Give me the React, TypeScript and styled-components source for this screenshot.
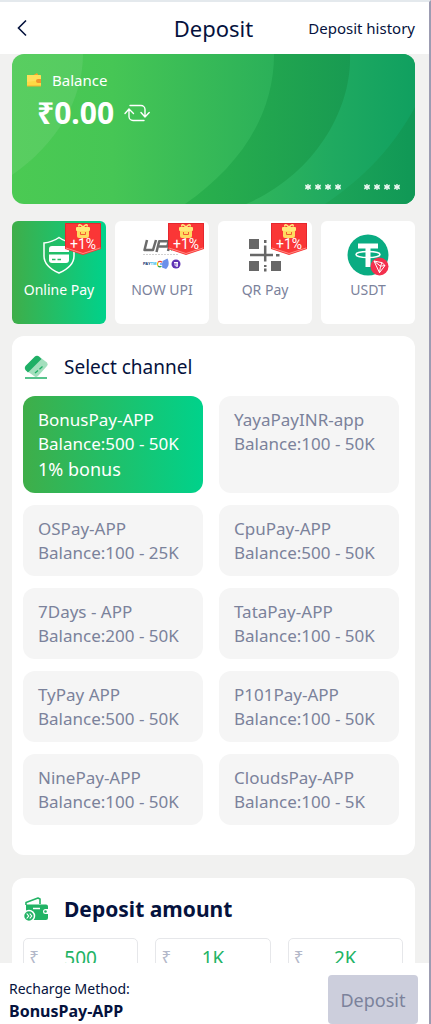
import React, { useState } from "react";
import styled, { createGlobalStyle } from "styled-components";

const GlobalStyle = createGlobalStyle`
  *, *::before, *::after { box-sizing: border-box; }
  body { margin: 0; background: #f1f1f0; font-family: "Noto Sans", "Open Sans", sans-serif; color: #05123d; }
  button { font: inherit; color: inherit; border: 0; padding: 0; background: none; cursor: pointer; }
  h1, h2, p { margin: 0; font-weight: 400; }
`;

const green = "linear-gradient(90deg, #3fae49, #00d28b)";

const Page = styled.div`
  display: flex;
  flex-direction: column;
  height: 100vh;
  border-top: 2px solid #e4e9ed;
  border-right: 2px solid #9c9cb2;
`;

const Header = styled.header`
  display: grid;
  grid-template-columns: 1fr auto 1fr;
  align-items: center;
  flex: none;
  height: 52px;
  padding: 0 14px 0 12px;
  background: #fff;
`;

const BackButton = styled.button`
  display: flex;
  justify-self: start;
`;

const Title = styled.h1`
  font-size: 22px;
  line-height: 30px;
`;

const HistoryLink = styled.a`
  justify-self: end;
  color: inherit;
  font-size: 15px;
  line-height: 20px;
  text-decoration: none;
  white-space: nowrap;
`;

const Main = styled.main`
  flex: 1;
  min-height: 0;
  overflow-y: auto;
  scrollbar-width: none;
  padding: 0 14px 24px 12px;
`;

const BalanceCard = styled.section`
  position: relative;
  z-index: 0;
  display: flex;
  flex-direction: column;
  height: 150px;
  padding: 15px 14px 13px;
  border-radius: 12px;
  overflow: hidden;
  color: #fff;
`;

const CardArt = styled.svg`
  position: absolute;
  inset: 0;
  width: 100%;
  height: 100%;
  z-index: -1;
`;

const BalanceLabel = styled.div`
  display: flex;
  align-items: center;
  gap: 10px;
  font-size: 15px;
  line-height: 22px;
`;

const BalanceRow = styled.div`
  display: flex;
  align-items: center;
  gap: 10px;
  padding: 4px 0 0 11px;
`;

const Amount = styled.strong`
  font-size: 30px;
  line-height: 36px;
`;

const RefreshButton = styled.button`
  display: flex;
`;

const Mask = styled.div`
  display: flex;
  justify-content: flex-end;
  gap: 21px;
  margin-top: auto;
`;

const Methods = styled.nav`
  display: grid;
  grid-template-columns: repeat(4, 1fr);
  gap: 9px;
  margin: 17px 0 12px;
`;

const Method = styled.button<{ $active: boolean }>`
  position: relative;
  display: flex;
  flex-direction: column;
  align-items: center;
  height: 103px;
  padding-top: 13px;
  border-radius: 6px;
  font-size: 14px;
  line-height: 20px;
  color: ${(p) => (p.$active ? "#fff" : "#7b829b")};
  background: ${(p) => (p.$active ? green : "#fff")};
`;

const MethodLabel = styled.span`
  margin-top: 4px;
`;

const Ribbon = styled.span`
  position: absolute;
  top: 0;
  right: 3px;
  display: flex;
  width: 40px;
  height: 36px;
  justify-content: center;
  align-items: flex-end;
  padding-bottom: 5px;
  font-family: Roboto, sans-serif;
  font-size: 14px;
  line-height: 16px;
  color: #fff;
`;

const RibbonArt = styled.svg`
  position: absolute;
  inset: 0;
`;

const RibbonText = styled.span`
  position: relative;
`;

const Panel = styled.section`
  padding: 18px 12px 30px 11px;
  margin-bottom: 23px;
  border-radius: 12px;
  background: #fff;
`;

const PanelHead = styled.div`
  display: flex;
  align-items: center;
  gap: 15px;
  height: 26px;
  margin-bottom: 16px;
`;

const PanelTitle = styled.h2<{ $bold?: boolean }>`
  font-size: ${(p) => (p.$bold ? 21 : 19)}px;
  line-height: 26px;
  font-weight: ${(p) => (p.$bold ? 700 : 400)};
`;

const Channels = styled.div`
  display: grid;
  grid-template-columns: 1fr 1fr;
  gap: 12px 16px;
  padding-right: 4px;
`;

const Channel = styled.button<{ $active: boolean }>`
  display: flex;
  flex-direction: column;
  padding: 12px 15px 11px;
  border-radius: 12px;
  text-align: left;
  font-size: 17px;
  line-height: 24px;
  white-space: nowrap;
  color: ${(p) => (p.$active ? "#fff" : "#7b829b")};
  background: ${(p) => (p.$active ? green : "#f5f5f5")};
`;

const Bonus = styled.span`
  font-size: 18px;
  line-height: 26px;
`;

const Amounts = styled.div`
  display: grid;
  grid-template-columns: repeat(3, 1fr);
  gap: 17px;
`;

const AmountOption = styled.button`
  display: grid;
  grid-template-columns: 10px 1fr 10px;
  align-items: center;
  height: 40px;
  padding: 0 5px;
  border: 1px solid #e6e7ea;
  border-radius: 5px;
  font-size: 19px;
  line-height: 24px;
  color: #22b365;
`;

const Rupee = styled.span`
  font-size: 17px;
  color: #b3b8c9;
`;

const Footer = styled.footer`
  display: flex;
  flex: none;
  justify-content: space-between;
  align-items: flex-start;
  height: 61px;
  padding: 12px 11px 0 9px;
  background: #fff;
`;

const Recharge = styled.p`
  padding-top: 3px;
  font-size: 14px;
  line-height: 22px;
`;

const Chosen = styled.strong`
  display: block;
  font-size: 16px;
`;

const SubmitButton = styled.button`
  width: 90px;
  height: 49px;
  border-radius: 4px;
  font-size: 18px;
  color: #7b829b;
  background: #cccedc;
`;

const Stars = () => (
  <svg width="38" height="8" viewBox="0 0 38 8" fill="none" stroke="#fff" strokeOpacity=".9" strokeWidth="1.4">
    {[4, 14, 24, 34].map((x) => (
      <path key={x} d={`M${x} 1v6M${x - 2.7} 2l5.4 4M${x + 2.7} 2l-5.4 4M${x - 2.5} 4h5`} />
    ))}
  </svg>
);

const ShieldIcon = () => (
  <svg width="36" height="42" viewBox="0 0 36 42">
    <path d="M18 3.5C13 7 8 8.500 3 9v13c0 8 7 13.500 15 17 8-3.500 15-9 15-17V9c-5-.5-10-2-15-5.500Z" fill="none" stroke="#fff" strokeWidth="1.500" />
    <path d="M11 12h14a3 3 0 0 1 3 3v3H8v-3a3 3 0 0 1 3-3Z" fill="#fff" />
    <path d="M8 20.500h20v5.500a3 3 0 0 1-3 3H11a3 3 0 0 1-3-3Z" fill="#fff" />
    <path d="M11 25.500h3.500M16.500 25.500H20" stroke="#28ba63" strokeWidth="1.500" />
  </svg>
);

const UpiIcon = () => (
  <svg width="42" height="42" viewBox="0 0 42 42">
    <g fill="none" stroke="#6b6b6b" strokeWidth="2.500" strokeLinejoin="round">
      <path d="M6 6 3.500 16h8.500L15 6" />
      <path d="m15.500 18 2.700-10.700h9.500l-1.300 5.200H18" />
      <path d="M30 6 27 17" />
    </g>
    <path d="M33 6 38 11 30 17Z" fill="#219653" />
    <path d="M2 20.500h36" stroke="#d2d2d2" strokeDasharray="2 1" />
    <text x="2" y="31" fontFamily="Liberation Sans" fontWeight="700" fontSize="4" fill="#10346f">PAY<tspan fill="#20b7ec">TM</tspan></text>
    <path d="M21 28.300a3 3 0 0 0-4 0" fill="none" stroke="#ea4335" strokeWidth="1.300" />
    <path d="M17 28.300a3 3 0 0 0 0 3.600" fill="none" stroke="#fbbc05" strokeWidth="1.300" />
    <path d="M17 31.900a3 3 0 0 0 3.500.4" fill="none" stroke="#34a853" strokeWidth="1.300" />
    <path d="M19 30h3" fill="none" stroke="#4285f4" strokeWidth="1.300" />
    <path d="m21.500 27 5-2.500c2 4 1.500 8-1.500 10.500l-4-1.500Z" fill="#6b90ea" />
    <circle cx="35" cy="30" r="4.500" fill="#5f33b4" />
    <path d="M33 28.500h4M34 28.500v2c0 1.500 1 2 2 1.500v-3.500M36.200 29v4" fill="none" stroke="#fff" />
  </svg>
);

const QrIcon = () => (
  <svg width="42" height="42" viewBox="0 0 42 42" fill="#676767">
    <path d="M5 5h10v10H5zM5 27h10v10H5zM27 27h10v10H27zM27 5h10v10H27z" />
    <path d="M20 6h2.500v3H20zM20 31h2.500v2H20zM20 34.500h2.500v3H20zM32 20h3.500v2.500H32z" />
    <path d="M6 21h23M21.200 11.500v16" stroke="#676767" strokeWidth="2.500" />
  </svg>
);

const UsdtIcon = () => (
  <svg width="42" height="42" viewBox="0 0 42 42">
    <circle cx="21" cy="21" r="20.500" fill="#0aac82" />
    <path d="M11 9.500h20v5h-7.500V33h-5V14.500H11Z" fill="#fff" />
    <ellipse cx="21" cy="20.500" rx="12" ry="3" fill="none" stroke="#fff" strokeWidth="1.500" />
    <circle cx="32.500" cy="32.500" r="9" fill="#f3304d" />
    <path d="m27 27 8 1.700 3 2.800-5.500 7.200Zm0 0 6.500 5.200 4.500-.7M35 28.700 33.500 32.200l-1 6.500" fill="none" stroke="#fff" strokeLinejoin="round" />
  </svg>
);

const Badge = () => (
  <Ribbon>
    <RibbonArt width="40" height="36" viewBox="0 0 40 36">
      <path d="M2 2h36v26l-18 6L2 28Z" fill="#fa3636" />
      <path d="M2.500 26V2.500h35V26" fill="none" stroke="#e5262e" />
      <path d="M3 27 20 32.500 37 27" fill="none" stroke="#ff8b84" />
      <path d="M14 9h12v6a2 2 0 0 1-2 2h-8a2 2 0 0 1-2-2Z" fill="#ffdc60" />
      <rect x="13" y="6" width="14" height="4" rx="1" fill="#ffe879" />
      <path d="M20 6.500c-2-3.500-5-3.500-4-1M20 6.500c2-3.500 5-3.500 4-1" fill="none" stroke="#ffe879" strokeWidth="1.600" />
      <path d="M17.500 11v2.500h5V11" fill="none" stroke="#f35b35" />
    </RibbonArt>
    <RibbonText>+1%</RibbonText>
  </Ribbon>
);

const WalletIcon = () => (
  <svg width="16" height="16" viewBox="0 0 16 16">
    <path d="m6 4 5-3 2 3Z" fill="#ff9f22" />
    <path d="M1 3h13a1 1 0 0 1 1 1v10H1Z" fill="#ffd944" />
    <path d="M1 3h13a1 1 0 0 1 1 1v4L1 10Z" fill="#ffe264" opacity=".7" />
    <path d="M1 14h14" stroke="#f7ad2c" />
    <path d="M12 7h3v4h-3a2 2 0 0 1 0-4Z" fill="#f3952b" />
  </svg>
);

const RefreshIcon = () => (
  <svg width="26" height="18" viewBox="0 0 26 18" fill="none" stroke="#fff" strokeWidth="1.400" strokeLinecap="round" strokeLinejoin="round">
    <path d="M6 1.500h11a4 4 0 0 1 4 4V13M17 8.500l4 4.500 4.200-4.500" />
    <path d="M20 16.500H9a4 4 0 0 1-4-4V5M1 9.500 5 5l4.500 4.500" />
  </svg>
);

const CardIcon = () => (
  <svg width="26" height="26" viewBox="0 0 26 26">
    <path d="M12 2.500Q14 1 16 2.500L24 8.500Q25.500 10.500 24 12L15 22Q13 24 11 22L2.500 16Q1 14 2.500 12Z" fill="#a3dfbd" />
    <path d="M12 2.500Q14 1 16 2.500L18.500 5 5 18.500 2.500 16Q1 14 2.500 12Z" fill="#1faf66" />
    <path d="m12 19 3-2.500m1.500-1.300 3-2.700" stroke="#1faf66" strokeWidth="1.300" />
    <path d="M2 24h22" stroke="#1faf66" strokeWidth="1.500" />
  </svg>
);

const CashIcon = () => (
  <svg width="26" height="26" viewBox="0 0 26 26">
    <path d="M3 9V6.500L15 2l2 1v5" fill="none" stroke="#22b365" strokeWidth="1.600" strokeLinejoin="round" />
    <path d="M3 8.500h20q2 0 2 2V13h-2.500a2.500 2.500 0 0 0 0 5H25v4q0 2-2 2H6q-3 0-3-3Z" fill="#22b365" />
    <circle cx="22.500" cy="15.500" r="1.300" fill="#22b365" />
    <path d="M10 12.500h7" stroke="#fff" strokeWidth="1.500" />
    <circle cx="6" cy="20" r="5.500" fill="#22b365" stroke="#fff" strokeWidth="1.500" />
    <path d="m3.700 17.500 2 2.500-2 2.500m3-5 2 2.500-2 2.500" fill="none" stroke="#fff" strokeWidth="1.200" />
  </svg>
);

const methods = [
  { name: "Online Pay", Icon: ShieldIcon, badge: true },
  { name: "NOW UPI", Icon: UpiIcon, badge: true },
  { name: "QR Pay", Icon: QrIcon, badge: true },
  { name: "USDT", Icon: UsdtIcon, badge: false },
];

const channels: { name: string; range: string; bonus?: string }[] = [
  { name: "BonusPay-APP", range: "500 - 50K", bonus: "1% bonus" },
  { name: "YayaPayINR-app", range: "100 - 50K" },
  { name: "OSPay-APP", range: "100 - 25K" },
  { name: "CpuPay-APP", range: "500 - 50K" },
  { name: "7Days - APP", range: "200 - 50K" },
  { name: "TataPay-APP", range: "100 - 50K" },
  { name: "TyPay APP", range: "500 - 50K" },
  { name: "P101Pay-APP", range: "100 - 50K" },
  { name: "NinePay-APP", range: "100 - 50K" },
  { name: "CloudsPay-APP", range: "100 - 5K" },
];

export default function App() {
  const [method, setMethod] = useState("Online Pay");
  const [channel, setChannel] = useState("BonusPay-APP");
  return (
    <>
      <GlobalStyle />
      <Page>
        <Header>
          <BackButton aria-label="Back">
            <svg width="20" height="20" viewBox="0 0 20 20" fill="none" stroke="#05123d" strokeWidth="1.600">
              <path d="M14 2.500 6.500 10l7.500 7.500" />
            </svg>
          </BackButton>
          <Title>Deposit</Title>
          <HistoryLink href="#history">Deposit history</HistoryLink>
        </Header>
        <Main>
          <BalanceCard>
            <CardArt viewBox="0 0 403 150" preserveAspectRatio="none">
              <defs>
                <linearGradient id="base" x1="0" y1="0" x2="1" y2="0">
                  <stop offset="0" stopColor="#4bca53" />
                  <stop offset=".25" stopColor="#46c655" />
                  <stop offset=".65" stopColor="#2bb059" />
                  <stop offset="1" stopColor="#2bb059" />
                </linearGradient>
                <linearGradient id="band" x1="0" y1="0" x2="1" y2="0">
                  <stop offset="0" stopColor="#2bb14c" />
                  <stop offset="1" stopColor="#189a52" />
                </linearGradient>
                <linearGradient id="light" x1="0" y1="0" x2="1" y2="0">
                  <stop offset="0" stopColor="#31b65b" />
                  <stop offset=".5" stopColor="#20aa60" />
                  <stop offset="1" stopColor="#10a060" />
                </linearGradient>
                <linearGradient id="edge" x1="0" y1="0" x2="1" y2="0">
                  <stop offset="0" stopColor="#1ea558" />
                  <stop offset="1" stopColor="#109856" />
                </linearGradient>
              </defs>
              <path d="M0 0h403v150H0Z" fill="url(#base)" />
              <path d="M0 0h71C71 45 45 90 0 121Z" fill="#fff" opacity=".08" />
              <path d="M173 150C226 113 262 63 262 0h79v150Z" fill="url(#band)" />
              <path d="M338 0h65v150H234C300 122 340 58 338 0Z" fill="url(#light)" />
              <path d="M403 53v97h-90c40-27 69-58 90-97Z" fill="url(#edge)" />
            </CardArt>
            <BalanceLabel>
              <WalletIcon />
              Balance
            </BalanceLabel>
            <BalanceRow>
              <Amount>₹0.00</Amount>
              <RefreshButton aria-label="Refresh balance"><RefreshIcon /></RefreshButton>
            </BalanceRow>
            <Mask><Stars /><Stars /></Mask>
          </BalanceCard>
          <Methods aria-label="Deposit methods">
            {methods.map(({ name, Icon, badge }) => (
              <Method key={name} $active={name === method} onClick={() => setMethod(name)}>
                <Icon />
                {badge && <Badge />}
                <MethodLabel>{name}</MethodLabel>
              </Method>
            ))}
          </Methods>
          <Panel>
            <PanelHead>
              <CardIcon />
              <PanelTitle>Select channel</PanelTitle>
            </PanelHead>
            <Channels>
              {channels.map((c) => (
                <Channel key={c.name} $active={c.name === channel} onClick={() => setChannel(c.name)}>
                  <span>{c.name}</span>
                  <span>Balance:{c.range}</span>
                  {c.bonus && <Bonus>{c.bonus}</Bonus>}
                </Channel>
              ))}
            </Channels>
          </Panel>
          <Panel>
            <PanelHead>
              <CashIcon />
              <PanelTitle $bold>Deposit amount</PanelTitle>
            </PanelHead>
            <Amounts>
              {["500", "1K", "2K"].map((a) => (
                <AmountOption key={a}>
                  <Rupee>₹</Rupee>
                  <span>{a}</span>
                </AmountOption>
              ))}
            </Amounts>
          </Panel>
        </Main>
        <Footer>
          <Recharge>
            Recharge Method:
            <Chosen>{channel}</Chosen>
          </Recharge>
          <SubmitButton>Deposit</SubmitButton>
        </Footer>
      </Page>
    </>
  );
}
